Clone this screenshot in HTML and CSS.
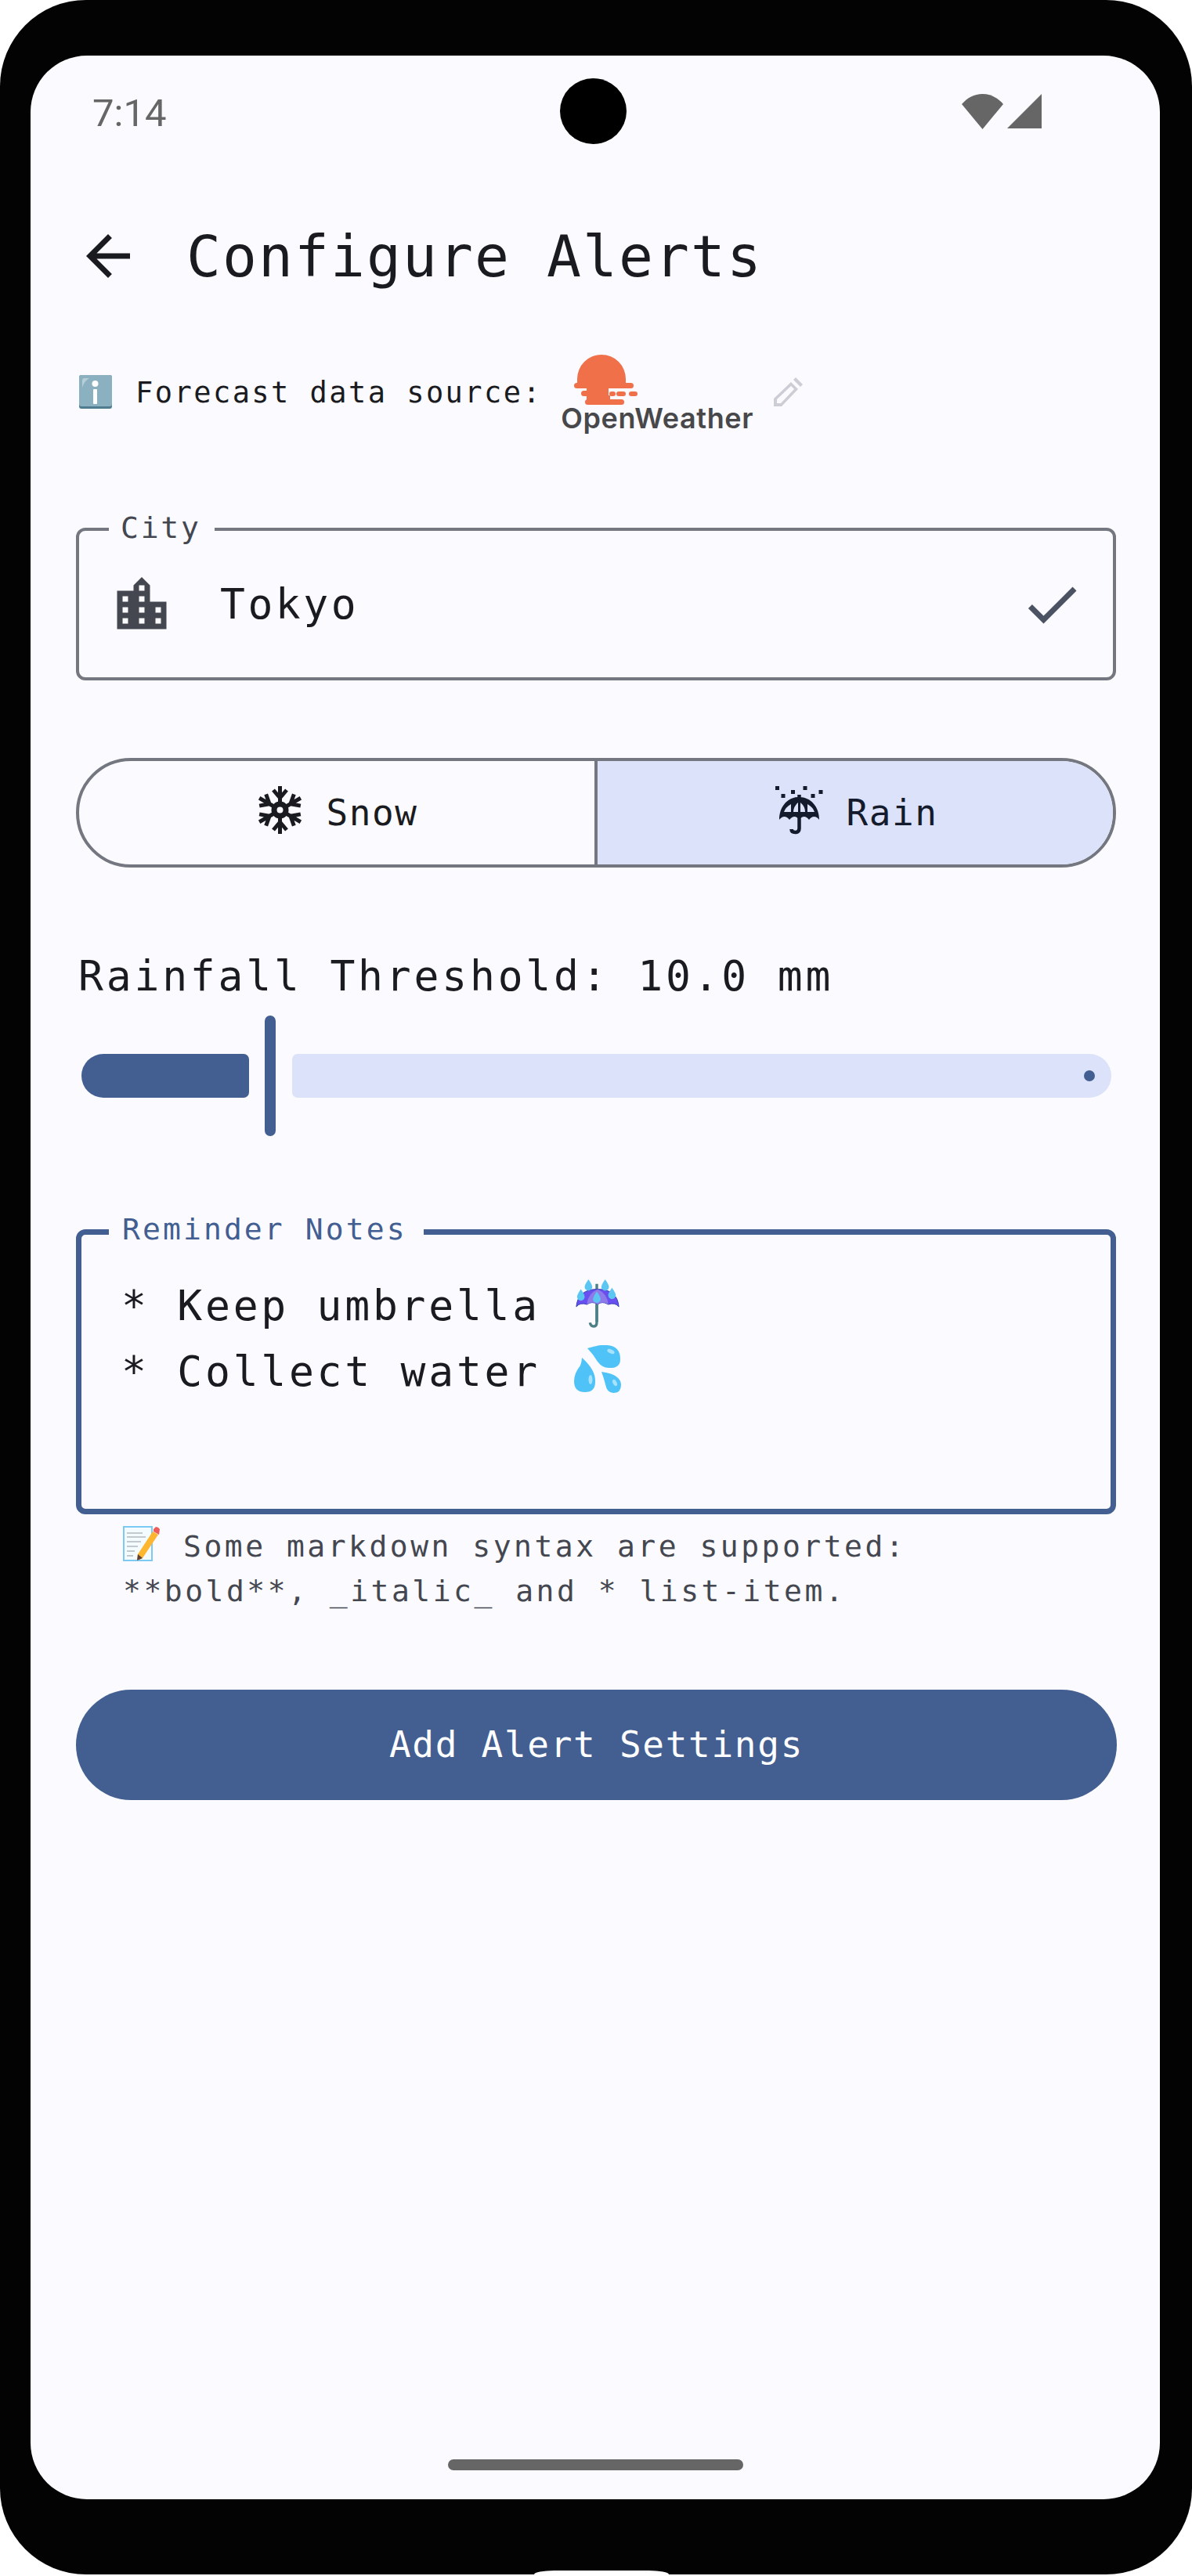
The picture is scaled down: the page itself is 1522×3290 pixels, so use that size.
FILE: index.html
```html
<!DOCTYPE html>
<html lang="en">
<head>
    <meta charset="UTF-8">
    <title>Configure Alerts</title>
    <link rel="stylesheet" href="styles.css">
</head>
<body>
    <div class="phone">
        <div class="screen">
            <div class="status-bar">
                <span class="clock">7:14</span>
                <div class="status-icons">
                    <svg class="wifi" viewBox="0 0 53 45"><path d="M26.500 45 0 13C7 5 16 0 26.500 0S46 5 53 13z"/></svg>
                    <svg class="signal" viewBox="0 0 44 44"><path d="M44 0v44H0z"/></svg>
                </div>
            </div>
            <div class="camera"></div>

            <header class="app-bar">
                <svg class="icon-lg back" viewBox="0 0 24 24"><path d="M20 11H7.830l5.590-5.590L12 4l-8 8 8 8 1.410-1.410L7.830 13H20v-2z"/></svg>
                <h1>Configure Alerts</h1>
            </header>

            <main class="content">
                <div class="source-row">
                    <svg class="emoji-info" viewBox="0 0 42 43">
                        <rect width="42" height="43" rx="3" fill="#4f7d8f"/>
                        <rect width="42" height="40" rx="3" fill="#8bb0c0"/>
                        <path d="M4 16V7q0-3 3-3h6q-6 3-9 12z" fill="#b5ced8"/>
                        <circle cx="20.500" cy="11" r="4" fill="#fff"/>
                        <rect x="18" y="18" width="5" height="19" rx="1" fill="#fff"/>
                    </svg>
                    <span class="source-label">Forecast data source:</span>
                    <div class="logo">
                        <svg class="logo-sun" viewBox="0 0 82 64">
                            <path d="M4 36v-5a31 31 0 0 1 62 0v5z" fill="#ef7049"/>
                            <rect x="0" y="36" width="76" height="7" rx="3.500" fill="#ef7049"/>
                            <rect x="16" y="42" width="28" height="16" fill="#ef7049"/>
                            <rect x="9" y="46" width="30" height="7" rx="3.500" fill="#ef7049"/>
                            <rect x="14" y="57" width="50" height="7" rx="3.500" fill="#ef7049"/>
                            <rect x="24" y="52" width="22" height="6" fill="#ef7049"/>
                            <rect x="45" y="47" width="8" height="6" rx="3" fill="#ef7049"/>
                            <rect x="54" y="47" width="12" height="6" rx="3" fill="#ef7049"/>
                            <rect x="70" y="47" width="11" height="6" rx="3" fill="#ef7049"/>
                        </svg>
                        <span class="logo-name">OpenWeather</span>
                    </div>
                    <svg class="pencil" viewBox="0 0 37 37"><path d="M0 37V27L22 6l9 9L10 37zM4 33h5L26 15l-4-4L4 28zM25 3l3-3 9 9-3 3z"/></svg>
                </div>

                <div class="field city-field">
                    <label class="field-label">City</label>
                    <svg class="icon-lg field-icon" viewBox="0 0 24 24"><path d="M15 11V5l-3-3-3 3v2H3v14h18V11h-6zm-8 8H5v-2h2v2zm0-4H5v-2h2v2zm0-4H5V9h2v2zm6 8h-2v-2h2v2zm0-4h-2v-2h2v2zm0-4h-2V9h2v2zm0-4h-2V5h2v2zm6 12h-2v-2h2v2zm0-4h-2v-2h2v2z"/></svg>
                    <span class="field-value">Tokyo</span>
                    <svg class="icon-lg field-check" viewBox="0 0 24 24"><path d="M9 16.170 4.830 12l-1.420 1.410L9 19 21 7l-1.410-1.410z"/></svg>
                </div>

                <div class="segments">
                    <div class="segment">
                        <svg class="seg-icon snow" viewBox="0 0 55 61">
                            <g class="flake">
                                <g id="arm">
                                    <path d="M27.500 0v22M19 5l8.500 10L36 5"/>
                                </g>
                                <use href="#arm" transform="rotate(60 27.500 30.500)"/>
                                <use href="#arm" transform="rotate(120 27.500 30.500)"/>
                                <use href="#arm" transform="rotate(180 27.500 30.500)"/>
                                <use href="#arm" transform="rotate(240 27.500 30.500)"/>
                                <use href="#arm" transform="rotate(300 27.500 30.500)"/>
                                <circle cx="27.500" cy="30.500" r="7.500"/>
                            </g>
                        </svg>
                        <span>Snow</span>
                    </div>
                    <div class="segment selected">
                        <svg class="seg-icon rain" viewBox="0 0 67 67">
                            <g class="umbrella">
                                <path class="canopy" d="M8 47C8 30 19 18 33.500 18S59 30 59 47q-3-4-6.500-4T46 47q-3-4-6.300-4t-6.200 4q-3-4-6.200-4T21 47q-3-4-6.500-4T8 47z"/>
                                <path class="rib" d="M14 37q2-6 9-10v10zM26 37q0-7 6-12v12zM35 37V25q6 5 6 12zM44 37V27q7 4 9 10z"/>
                                <path class="handle" d="M33.500 15v6M33.500 42v16q0 5-5 5t-5-4"/>
                                <path class="drop" d="M3 4h5v5H3zM10.500 14h5v5h-5zM23 9h5v5h-5zM38.500 4h5v5h-5zM48.500 14h5v5h-5zM58.500 9h5v5h-5z"/>
                            </g>
                        </svg>
                        <span>Rain</span>
                    </div>
                </div>

                <div class="threshold">Rainfall Threshold: 10.0 mm</div>

                <div class="slider">
                    <div class="slider-active"></div>
                    <div class="slider-thumb"></div>
                    <div class="slider-rest"><span class="slider-dot"></span></div>
                </div>

                <div class="field notes-field">
                    <label class="field-label notes-label">Reminder Notes</label>
                    <div class="note-line">
                        <span>* Keep umbrella</span>
                        <svg class="emoji-note" viewBox="0 0 58 64">
                            <path d="M28 6v50q0 6-4 6t-5-5" fill="none" stroke="#4d7f86" stroke-width="3.500"/>
                            <path d="M1 36Q3 13 29 13t28 23q-5-6-14-3-8-5-14 0-7-5-14 0-9-3-14 3z" fill="#6a4ff0" stroke="#2f3fb0" stroke-width="1"/>
                            <path d="M29 13q-13 6-14 20 7-5 14 0 7-5 14 0-1-14-14-20z" fill="#8e7ae8"/>
                            <path d="M28 56V33" stroke="#4d7f86" stroke-width="3.500"/>
                            <path d="M17 0q5 7 5 10a5 5 0 0 1-10 0q0-3 5-10zM39 0q5 7 5 10a5 5 0 0 1-10 0q0-3 5-10zM7 13q5 7 5 10a5 5 0 0 1-10 0q0-3 5-10zM28 16q5 7 5 10a5 5 0 0 1-10 0q0-3 5-10zM48 11q5 7 5 10a5 5 0 0 1-10 0q0-3 5-10z" fill="#5cc6f2"/>
                        </svg>
                    </div>
                    <div class="note-line">
                        <span>* Collect water</span>
                        <svg class="emoji-note" viewBox="0 0 60 62">
                            <path d="M10 16q18 16 17 31 0 13-13 13Q0 60 0 46q0-10 8-20 2-6 2-10z" fill="#4fc3f7"/>
                            <path d="M17 4Q32-1 42 0q17 1 17 18 0 12-15 11-8 0-14-8-6-10-13-17z" fill="#4fc3f7"/>
                            <path d="M35 34q15 2 20 7 5 4 5 10 0 10-10 10-8 0-10-11-2-8-5-16z" fill="#4fc3f7"/>
                            <ellipse cx="21" cy="44" rx="2.500" ry="6" fill="#a6e2fb"/>
                            <ellipse cx="47" cy="8" rx="5" ry="2.500" transform="rotate(25 47 8)" fill="#a6e2fb"/>
                            <ellipse cx="52" cy="48" rx="2.500" ry="4.500" transform="rotate(-25 52 48)" fill="#a6e2fb"/>
                        </svg>
                    </div>
                </div>

                <p class="helper">
                    <svg class="emoji-memo" viewBox="0 0 47 46">
                        <rect x="1" y="2" width="36" height="43" fill="#f4fbff" stroke="#7cc9f2" stroke-width="2"/>
                        <path d="M5 10h20M5 15h24M5 21h18M5 27h14M5 33h10M5 39h8" stroke="#b3bac0" stroke-width="1.500"/>
                        <path d="M38 8l7 4-20 30-7 3 1-8z" fill="#fdb62f"/>
                        <path d="M39 5l3-3q3 0 5 3l-1 7-7-4z" fill="#ef5a5a"/>
                        <path d="M18 45l1-8 6 5z" fill="#5d4037"/>
                    </svg><span class="helper-first">Some markdown syntax are supported:</span><br>**bold**, _italic_ and * list-item.
                </p>

                <button class="primary-btn">Add Alert Settings</button>
            </main>

            <div class="nav-pill"></div>
        </div>
        <div class="chin-notch"></div>
    </div>
</body>
</html>
```

FILE: styles.css
```css
:root {
    --primary: #435e91;
    --primary-soft: #dce2f9;
    --surface: #fafaff;
    --text: #1a1b20;
    --text-muted: #44474f;
    --outline: #74777f;
    --mono: "DejaVu Sans Mono", "Liberation Mono", monospace;
}

* {
    margin: 0;
    padding: 0;
    box-sizing: border-box;
}

body {
    background: #fff;
    font-family: var(--mono);
    color: var(--text);
}

.phone {
    position: relative;
    width: 1522px;
    height: 3288px;
    padding: 71px 41px 96px 39px;
    background: #030303;
    border-radius: 110px;
    overflow: hidden;
}

.screen {
    position: relative;
    display: flex;
    flex-direction: column;
    height: 100%;
    background: var(--surface);
    border-radius: 72px;
}

.chin-notch {
    position: absolute;
    left: 682px;
    bottom: 0;
    width: 172px;
    height: 5px;
    background: #fff;
    border-radius: 26px 26px 0 0 / 5px 5px 0 0;
}

/* status bar */
.status-bar {
    display: flex;
    justify-content: space-between;
    align-items: center;
    height: 120px;
    padding: 0 151px 0 79px;
}

.clock {
    margin-top: 26px;
    font-family: Roboto, sans-serif;
    font-size: 49px;
    color: #666;
}

.status-icons {
    display: flex;
    gap: 5px;
    margin-top: 22px;
}

.wifi {
    width: 53px;
    height: 45px;
    fill: #666;
}

.signal {
    width: 44px;
    height: 44px;
    fill: #666;
}

.camera {
    position: absolute;
    left: 676px;
    top: 29px;
    width: 85px;
    height: 84px;
    background: #000;
    border-radius: 50%;
}

.camera::after {
    content: "";
    position: absolute;
    left: 8px;
    top: 75px;
    width: 9px;
    height: 3px;
    background: var(--surface);
}

/* top bar */
.app-bar {
    display: flex;
    align-items: center;
    gap: 58px;
    height: 152px;
    margin-top: 60px;
    padding-left: 57px;
}

.app-bar h1 {
    font-size: 73px;
    font-weight: 400;
    letter-spacing: 2.050px;
}

.icon-lg {
    flex: none;
    width: 84px;
    height: 84px;
}

.back {
    fill: var(--text);
}

.content {
    padding: 0 56px 0 58px;
}

/* forecast source */
.source-row {
    display: flex;
    align-items: flex-start;
    height: 103px;
    margin-top: 50px;
}

.emoji-info {
    flex: none;
    width: 42px;
    height: 43px;
    margin: 26px 0 0 4px;
}

.source-label {
    margin: 19px 0 0 30px;
    font-size: 37px;
    line-height: 60px;
    letter-spacing: 2.450px;
    white-space: nowrap;
}

.logo {
    display: flex;
    flex-direction: column;
    align-items: flex-start;
    width: 244px;
    margin-left: 24px;
}

.logo-sun {
    width: 82px;
    height: 64px;
    margin-left: 17px;
}

.logo-name {
    margin-top: -3px;
    font-family: Inter, sans-serif;
    font-size: 36px;
    line-height: 40px;
    font-weight: 600;
    letter-spacing: 0.600px;
    color: #48484a;
}

.pencil {
    flex: none;
    width: 37px;
    height: 37px;
    margin: 29px 0 0 28px;
    fill: #cdcdd6;
    fill-rule: evenodd;
}

/* outlined fields */
.field {
    position: relative;
    border: 4px solid var(--outline);
    border-radius: 12px;
}

.field-label {
    position: absolute;
    left: 38px;
    top: -29px;
    padding: 0 17px 0 15px;
    background: var(--surface);
    font-size: 38px;
    line-height: 50px;
    letter-spacing: 2.800px;
    color: var(--text-muted);
}

.city-field {
    display: flex;
    align-items: center;
    height: 195px;
    margin-top: 118px;
    padding: 0 36px 0 38px;
}

.field-icon {
    fill: var(--text-muted);
}

.field-value {
    flex: 1;
    margin-left: 58px;
    font-size: 53px;
    letter-spacing: 3.500px;
}

.field-check {
    fill: #4b5262;
}

/* snow / rain switch */
.segments {
    display: flex;
    height: 140px;
    margin-top: 99px;
    border: 4px solid var(--outline);
    border-radius: 70px;
    overflow: hidden;
}

.segment {
    flex: 1;
    display: flex;
    align-items: center;
    justify-content: center;
    gap: 35px;
    font-size: 46px;
    letter-spacing: 1.500px;
}

.segment + .segment {
    border-left: 4px solid var(--outline);
}

.selected {
    background: var(--primary-soft);
    color: #141b2c;
}

.seg-icon {
    flex: none;
}

.seg-icon.snow {
    width: 55px;
    height: 61px;
    margin: -8px -3px 0 3px;
}

.seg-icon.rain {
    width: 67px;
    height: 67px;
    margin: -9px -8px 0 0;
}

.flake path {
    fill: none;
    stroke: var(--text);
    stroke-width: 5px;
}

.flake circle {
    fill: none;
    stroke: var(--text);
    stroke-width: 7px;
}

.umbrella .canopy,
.umbrella .drop {
    fill: #141b2c;
}

.umbrella .rib {
    fill: var(--primary-soft);
}

.umbrella .handle {
    fill: none;
    stroke: #141b2c;
    stroke-width: 4.500px;
}

/* threshold slider */
.threshold {
    margin-top: 104px;
    padding-left: 3px;
    font-size: 53px;
    line-height: 70px;
    letter-spacing: 3.800px;
    white-space: nowrap;
}

.slider {
    display: flex;
    align-items: center;
    height: 154px;
    margin-top: 15px;
    padding: 0 6px 0 7px;
}

.slider-active {
    width: 214px;
    height: 56px;
    background: var(--primary);
    border-radius: 28px 7px 7px 28px;
}

.slider-thumb {
    flex: none;
    width: 14px;
    height: 154px;
    margin: 0 21px 0 20px;
    background: var(--primary);
    border-radius: 7px;
}

.slider-rest {
    flex: 1;
    display: flex;
    align-items: center;
    justify-content: flex-end;
    height: 56px;
    padding-right: 21px;
    background: var(--primary-soft);
    border-radius: 7px 28px 28px 7px;
}

.slider-dot {
    width: 14px;
    height: 14px;
    background: var(--primary);
    border-radius: 50%;
}

/* notes */
.notes-field {
    height: 364px;
    margin-top: 119px;
    padding: 49px 0 0 51px;
    border: 7px solid var(--primary);
}

.notes-label {
    left: 35px;
    top: -32px;
    padding: 0 21px 0 17px;
    letter-spacing: 3.100px;
    color: var(--primary);
}

.note-line {
    display: flex;
    align-items: flex-start;
    height: 84px;
    font-size: 53px;
    line-height: 84px;
    letter-spacing: 3.750px;
    white-space: nowrap;
}

.emoji-note {
    flex: none;
    width: 60px;
    height: 62px;
    margin: 8px 0 0 43px;
}

.helper {
    margin-top: 13px;
    padding-left: 60px;
    font-size: 38px;
    line-height: 57px;
    letter-spacing: 3.500px;
    color: var(--text-muted);
    white-space: nowrap;
}

.emoji-memo {
    width: 47px;
    height: 46px;
    vertical-align: -6px;
}

.helper-first {
    margin-left: 30px;
}

.primary-btn {
    display: block;
    width: calc(100% + 1px);
    height: 141px;
    margin-top: 97px;
    padding-bottom: 2px;
    background: var(--primary);
    border: none;
    border-radius: 71px;
    font-family: var(--mono);
    font-size: 46px;
    letter-spacing: 1.700px;
    color: #fff;
}

.nav-pill {
    width: 377px;
    height: 14px;
    margin: auto auto 37px;
    background: #666;
    border-radius: 7px;
}
```
